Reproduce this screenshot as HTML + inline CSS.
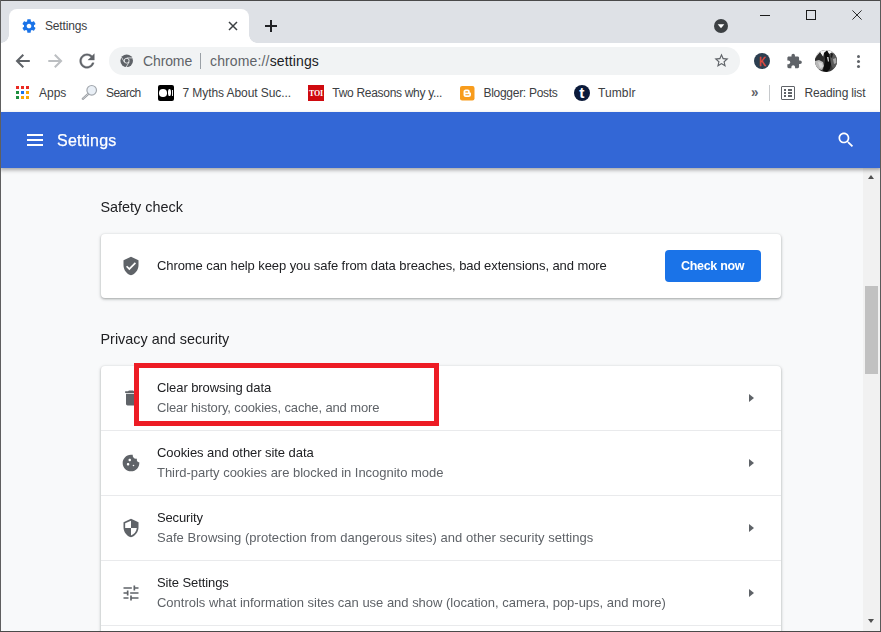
<!DOCTYPE html>
<html lang="en">
<head>
<meta charset="utf-8">
<title>Settings</title>
<style>
html,body{margin:0;padding:0;}
body{width:881px;height:632px;overflow:hidden;background:#fff;font-family:"Liberation Sans",sans-serif;position:relative;}
.abs{position:absolute;}
.t{position:absolute;white-space:nowrap;line-height:1;}
#win{position:absolute;left:0;top:0;width:881px;height:632px;overflow:hidden;}
/* tab strip */
#tabstrip{left:0;top:0;width:881px;height:43px;background:#dee1e6;}
#tab{left:9px;top:9px;width:240px;height:34px;background:#fff;border-radius:8px 8px 0 0;}
#toolbar{left:0;top:43px;width:881px;height:36px;background:#fff;}
#omni{left:109px;top:47px;width:631px;height:27.500px;border-radius:14px;background:#f1f3f4;}
#bm{left:0;top:79px;width:881px;height:33px;background:#fff;}
.bmt{font-size:12px;color:#3c4043;top:87px;}
/* settings */
#hdr{left:0;top:112px;width:881px;height:56px;background:#3367d6;box-shadow:0 2px 4px rgba(0,0,0,.35);z-index:3;}
#page{left:0;top:168px;width:881px;height:464px;background:#f8f9fa;}
.gs{will-change:transform;}
.card{background:#fff;border-radius:4px;box-shadow:0 1px 2px rgba(60,64,67,.3),0 1px 3px 1px rgba(60,64,67,.15);}
.h2{font-size:14.4px;color:#202124;}
.pt{font-size:13px;color:#202124;}
.ps{font-size:13px;color:#5f6368;}
.sep{position:absolute;left:0;width:680px;height:1px;background:#e9eaec;}
.arrow{position:absolute;width:0;height:0;border-left:5px solid #5f6368;border-top:4.5px solid transparent;border-bottom:4.5px solid transparent;}
</style>
</head>
<body>
<div id="win">
  <!-- TAB STRIP -->
  <div id="tabstrip" class="abs"></div>
  <div class="abs" style="left:1px;top:35px;width:8px;height:8px;background:radial-gradient(circle at 0 0,#dee1e6 7.5px,#fff 8px);"></div>
  <div class="abs" style="left:249px;top:35px;width:8px;height:8px;background:radial-gradient(circle at 100% 0,#dee1e6 7.5px,#fff 8px);"></div>
  <div id="tab" class="abs"></div>
  <!-- gear favicon -->
  <svg class="abs" style="left:21px;top:18px" width="16" height="16" viewBox="0 0 24 24"><path fill="#1a73e8" d="M19.43 12.98c.04-.32.07-.64.07-.98s-.03-.66-.07-.98l2.11-1.65c.19-.15.24-.42.12-.64l-2-3.46c-.12-.22-.39-.3-.61-.22l-2.49 1c-.52-.4-1.08-.73-1.69-.98l-.38-2.65C14.46 2.18 14.25 2 14 2h-4c-.25 0-.46.18-.49.42l-.38 2.65c-.61.25-1.17.59-1.69.98l-2.49-1c-.23-.09-.49 0-.61.22l-2 3.46c-.13.22-.07.49.12.64l2.11 1.65c-.04.32-.07.65-.07.98s.03.66.07.98l-2.11 1.65c-.19.15-.24.42-.12.64l2 3.46c.12.22.39.3.61.22l2.49-1c.52.4 1.080.73 1.69.98l.38 2.65c.03.24.24.42.49.42h4c.25 0 .46-.18.49-.42l.38-2.65c.61-.25 1.17-.59 1.69-.98l2.49 1c.23.09.49 0 .61-.22l2-3.46c.12-.22.07-.49-.12-.64l-2.11-1.65zM12 15.5c-1.93 0-3.5-1.57-3.5-3.5s1.570-3.500 3.500-3.500 3.500 1.570 3.500 3.500-1.570 3.500-3.500 3.500z"/></svg>
  <span class="t" id="tabtitle" style="left:45px;top:20px;font-size:12px;color:#3c4043;letter-spacing:-.17px;">Settings</span>
  <!-- tab close -->
  <svg class="abs" style="left:228px;top:21px" width="10" height="10" viewBox="0 0 10 10"><path d="M1 1L9 9M9 1L1 9" stroke="#3c4043" stroke-width="1.5" fill="none"/></svg>
  <!-- new tab plus -->
  <svg class="abs" style="left:265px;top:20px" width="12" height="12" viewBox="0 0 12 12"><path d="M6 0V12M0 6H12" stroke="#202124" stroke-width="2" fill="none"/></svg>
  <!-- tab search -->
  <svg class="abs" style="left:714px;top:18.800px" width="14" height="14" viewBox="0 0 16 16"><circle cx="8" cy="8" r="8" fill="#3c4043"/><path d="M4.200 6.100H11.800L8 10.700z" fill="#fff"/></svg>
  <!-- window controls -->
  <div class="abs" style="left:760px;top:15px;width:10px;height:1px;background:#1b1b1b;"></div>
  <div class="abs" style="left:806px;top:10px;width:8px;height:8px;border:1px solid #1b1b1b;"></div>
  <svg class="abs" style="left:852px;top:10px" width="10" height="10" viewBox="0 0 12 12"><path d="M0.500 0.500L11.500 11.500M11.500 0.500L0.500 11.500" stroke="#1b1b1b" stroke-width="1.100" fill="none"/></svg>

  <!-- TOOLBAR -->
  <div id="toolbar" class="abs"></div>
  <svg class="abs" style="left:15px;top:53px" width="16" height="16" viewBox="0 0 16 16"><path d="M14.800 8H2.600M8.300 1.700L2 8L8.300 14.300" stroke="#5f6368" stroke-width="2" fill="none"/></svg>
  <svg class="abs" style="left:47px;top:53px" width="16" height="16" viewBox="0 0 16 16"><path d="M1.300 8H13.500M7.800 1.700L14.100 8L7.800 14.300" stroke="#bcbfc2" stroke-width="2" fill="none"/></svg>
  <svg class="abs" style="left:75.800px;top:50px" width="22" height="22" viewBox="0 0 24 24"><path fill="#5f6368" stroke="#5f6368" stroke-width=".35" d="M17.650 6.350C16.200 4.900 14.210 4 12 4c-4.420 0-7.990 3.580-7.990 8s3.570 8 7.990 8c3.730 0 6.840-2.550 7.730-6h-2.080c-.820 2.330-3.040 4-5.650 4-3.310 0-6-2.690-6-6s2.690-6 6-6c1.660 0 3.140.690 4.220 1.780L13 11h7V4l-2.350 2.350z"/></svg>
  <div id="omni" class="abs"></div>
  <!-- chrome icon -->
  <svg class="abs" style="left:120.300px;top:54.300px" width="13.400" height="13.400" viewBox="0 0 14 14"><circle cx="7" cy="7" r="6.600" fill="#5f6368"/><circle cx="7" cy="7" r="2.900" fill="#f1f3f4"/><circle cx="7" cy="7" r="2.100" fill="#5f6368"/><path d="M7 4.100H13M4.500 8.450L1.500 3.300M9.500 8.450L6.500 13.600" stroke="#f1f3f4" stroke-width=".800" fill="none"/></svg>
  <span class="t" id="omni1" style="left:143px;top:54.300px;font-size:14px;color:#5f6368;letter-spacing:-.12px;">Chrome</span>
  <div class="abs" style="left:200px;top:53px;width:1px;height:16px;background:#9aa0a6;"></div>
  <span class="t" id="omni2" style="left:210px;top:54.300px;font-size:14px;color:#5f6368;letter-spacing:.14px;">chrome://<span style="color:#202124">settings</span></span>
  <!-- star -->
  <svg class="abs" style="left:713px;top:52px" width="17" height="17" viewBox="0 0 24 24"><path fill="#5f6368" d="M22 9.240l-7.190-.620L12 2 9.190 8.630 2 9.240l5.460 4.730L5.820 21 12 17.270 18.180 21l-1.630-7.030L22 9.240zM12 15.400l-3.760 2.270 1-4.280-3.320-2.880 4.380-.380L12 6.100l1.710 4.040 4.380.380-3.320 2.880 1 4.280L12 15.400z"/></svg>
  <!-- K extension -->
  <div class="abs" style="left:754px;top:53px;width:16px;height:16px;border-radius:50%;background:#2c3e50;"></div>
  <span class="t" style="left:759px;top:54.500px;font-size:13px;color:#e74c3c;transform:scaleX(.78);transform-origin:0 0;-webkit-text-stroke:.4px #e74c3c;">K</span>
  <!-- puzzle -->
  <svg class="abs" style="left:786px;top:53.300px" width="16.500" height="16.500" viewBox="0 0 24 24"><path fill="#5f6368" d="M20.500 11H19V7c0-1.100-.900-2-2-2h-4V3.500C13 2.120 11.880 1 10.500 1S8 2.120 8 3.500V5H4c-1.100 0-1.990.900-1.990 2v3.800H3.500c1.490 0 2.700 1.210 2.700 2.700s-1.210 2.700-2.700 2.700H2V20c0 1.100.900 2 2 2h3.800v-1.500c0-1.490 1.210-2.700 2.700-2.700 1.490 0 2.700 1.210 2.700 2.700V22H17c1.100 0 2-.900 2-2v-4h1.500c1.380 0 2.500-1.120 2.500-2.500S21.880 11 20.500 11z"/></svg>
  <!-- avatar -->
  <svg class="abs" style="left:815px;top:50px" width="22" height="22" viewBox="0 0 22 22"><defs><clipPath id="avc"><circle cx="11" cy="11" r="11"/></clipPath></defs><g clip-path="url(#avc)"><rect width="22" height="22" fill="#3a3a3a"/><path d="M0 0H22V5L17 2.500 14 4 12 .500 9 3 8 7 5 2 0 8z" fill="#f4f4f4"/><path d="M0 9L5 2.500 9 8 8 12 4 13 0 12z" fill="#2b2b2b"/><path d="M0 11L4 10 8 12 9 16 7 20 3 19 0 15z" fill="#b9b9b9"/><path d="M3 12L7 13 8 17 5 18z" fill="#d6d6d6"/><path d="M9 3L12 .500 14 4 15 9 16 14 15 19 12 22 8 21 9 16 10 10z" fill="#0b0b0b"/><path d="M12 7L13.500 7 14 11 13 12z" fill="#cfcfcf"/><path d="M15 4L17 2.500 22 6V16L18 19 16 14z" fill="#5a5a5a"/><path d="M18 9L21 8 21.500 13 19 14z" fill="#a8a8a8"/><path d="M16 3L18 4 17 8 15.500 7z" fill="#1c1c1c"/></g></svg>
  <!-- menu dots -->
  <div class="abs" style="left:857px;top:55px;width:3px;height:3px;border-radius:50%;background:#5f6368;box-shadow:0 5px 0 #5f6368,0 10px 0 #5f6368;"></div>

  <!-- BOOKMARK BAR -->
  <div id="bm" class="abs"></div>
  <!-- apps grid -->
  <div class="abs" style="left:16px;top:86px;width:3px;height:3px;background:#ea2a22;box-shadow:5px 0 0 #ea2a22,10px 0 0 #ea2a22,0 5px 0 #1e8e3e,5px 5px 0 #1a73e8,10px 5px 0 #f9a602,0 10px 0 #1e8e3e,5px 10px 0 #f9a602,10px 10px 0 #f9a602;"></div>
  <span class="t bmt" id="b1" style="left:39px;">Apps</span>
  <!-- magnifier favicon -->
  <svg class="abs" style="left:81px;top:84px" width="17" height="17" viewBox="0 0 17 17"><path d="M1.800 14.800L6.800 10.300" stroke="#9a9ea3" stroke-width="2.300" stroke-linecap="round"/><path d="M1.800 14.800L6.800 10.300" stroke="#d9dcdf" stroke-width=".800" stroke-linecap="round"/><circle cx="10.700" cy="6.300" r="4.800" fill="#e9eff6" stroke="#a3a8ae" stroke-width="1.200"/></svg>
  <span class="t bmt" id="b2" style="left:106px;letter-spacing:-.55px;">Search</span>
  <!-- medium favicon -->
  <div class="abs" style="left:158px;top:85px;width:16px;height:16px;background:#000;border-radius:2px;"></div>
  <div class="abs" style="left:159.300px;top:89px;width:7.600px;height:7.600px;border-radius:50%;background:#fff;"></div>
  <div class="abs" style="left:168px;top:89.300px;width:3.400px;height:7px;border-radius:50%;background:#fff;"></div>
  <div class="abs" style="left:171.800px;top:89.800px;width:1.400px;height:6px;background:#e8e8e8;"></div>
  <span class="t bmt" id="b3" style="left:182.500px;letter-spacing:-.08px;">7 Myths About Suc...</span>
  <!-- TOI favicon -->
  <div class="abs" style="left:308px;top:85px;width:16px;height:16px;background:#cf0a0f;"></div>
  <span class="t" style="left:309px;top:89.700px;font-size:8px;font-weight:bold;color:#fff;font-family:'Liberation Serif',serif;letter-spacing:-.15px;">TOI</span>
  <span class="t bmt" id="b4" style="left:332.300px;letter-spacing:-.3px;">Two Reasons why y...</span>
  <!-- blogger favicon -->
  <svg class="abs" style="left:460px;top:86px" width="14.500" height="14.500" viewBox="0 0 14 14"><rect width="14" height="14" rx="2" fill="#f89c1c"/><path d="M5.600 3.400H7.400C8.800 3.400 9.400 4.300 9.400 5.300V5.700C9.400 6.100 9.700 6.200 10 6.200 10.400 6.200 10.600 6.500 10.600 6.900V8.400C10.600 9.700 9.700 10.600 8.400 10.600H5.600C4.300 10.600 3.400 9.700 3.400 8.400V5.600C3.400 4.300 4.300 3.400 5.600 3.400Z" fill="#fff"/><path d="M5.600 5.700H7.300M5.600 8.400H8.500" stroke="#f89c1c" stroke-width="1.100" stroke-linecap="round"/></svg>
  <span class="t bmt" id="b5" style="left:483.500px;letter-spacing:-.29px;">Blogger: Posts</span>
  <!-- tumblr favicon -->
  <div class="abs" style="left:574px;top:85px;width:16px;height:16px;border-radius:50%;background:#0b1a3a;"></div>
  <span class="t" style="left:579.300px;top:85px;font-size:15.500px;font-weight:bold;color:#fff;">t</span>
  <span class="t bmt" id="b6" style="left:598px;letter-spacing:.1px;">Tumblr</span>
  <!-- chevron -->
  <span class="t" style="left:750.500px;top:85px;font-size:14px;font-weight:bold;color:#5f6368;transform:scaleX(.95);transform-origin:0 0;">»</span>
  <div class="abs" style="left:769px;top:85px;width:1px;height:16px;background:#c6c9cc;"></div>
  <!-- reading list icon -->
  <div class="abs" style="left:781px;top:86px;width:12px;height:12px;border:1.300px solid #5f6368;border-radius:1px;"></div>
  <div class="abs" style="left:784px;top:89px;width:2px;height:1.500px;background:#5f6368;box-shadow:0 3px 0 #5f6368,0 6px 0 #5f6368;"></div>
  <div class="abs" style="left:787.500px;top:89px;width:4.500px;height:1.500px;background:#5f6368;box-shadow:0 3px 0 #5f6368,0 6px 0 #5f6368;"></div>
  <span class="t bmt" id="b7" style="left:804.500px;letter-spacing:-.15px;">Reading list</span>

  <!-- SETTINGS PAGE -->
  <div id="page" class="abs"><div class="abs gs" style="left:0;top:0;width:863px;height:464px;">
    <span class="t h2" id="s1" style="left:100.500px;top:31.500px;">Safety check</span>
    <div class="card abs" style="left:101px;top:66px;width:680px;height:64px;">
      <svg class="abs" style="left:20px;top:22px" width="20" height="20" viewBox="0 0 24 24"><path fill="#5f6368" d="M12 1L3 5v6c0 5.550 3.840 10.740 9 12 5.160-1.260 9-6.450 9-12V5l-9-4zm-2 16l-4-4 1.410-1.410L10 14.170l6.590-6.590L18 9l-8 8z"/></svg>
      <span class="t pt" id="s2" style="left:56px;top:25px;letter-spacing:-.085px;">Chrome can help keep you safe from data breaches, bad extensions, and more</span>
      <div class="abs" style="left:564px;top:16px;width:96px;height:32px;border-radius:4px;background:#1a73e8;"></div>
      <span class="t" id="s3" style="left:580px;top:25.800px;font-size:12.500px;font-weight:bold;color:#fff;letter-spacing:-.3px;">Check now</span>
    </div>
    <span class="t h2" id="s4" style="left:100.500px;top:164px;">Privacy and security</span>
    <div class="card abs" style="left:101px;top:198px;width:680px;height:300px;">
      <!-- row 1 -->
      <svg class="abs" style="left:20px;top:22px" width="20" height="20" viewBox="0 0 24 24"><path fill="#5f6368" d="M6 19c0 1.100.900 2 2 2h8c1.100 0 2-.900 2-2V7H6v12zM19 4h-3.500l-1-1h-5l-1 1H5v2h14V4z"/></svg>
      <div class="arrow" style="left:648px;top:27.500px;"></div>
      <div class="sep" style="top:64px;"></div>
      <!-- row 2 -->
      <svg class="abs" style="left:20px;top:87px" width="20" height="20" viewBox="0 0 24 24"><path fill="#5f6368" d="M21.950 10.990c-1.790-.030-3.700-1.950-2.680-4.220-2.980 1-5.770-1.590-5.190-4.560C6.950.710 2 6.580 2 12c0 5.520 4.480 10 10 10 5.890 0 10.540-5.080 9.950-11.010zM8.500 15c-.830 0-1.500-.670-1.500-1.500S7.670 12 8.500 12s1.500.670 1.500 1.500S9.330 15 8.500 15zm2-5C9.670 10 9 9.330 9 8.500S9.670 7 10.500 7s1.500.670 1.500 1.500-.670 1.500-1.500 1.500zm4.500 6c-.550 0-1-.450-1-1s.450-1 1-1 1 .450 1 1-.450 1-1 1z"/></svg>
      <span class="t pt" id="r2a" style="left:56px;top:80px;letter-spacing:-0.060px;">Cookies and other site data</span>
      <span class="t ps" id="r2b" style="left:56px;top:100px;letter-spacing:-0.025px;">Third-party cookies are blocked in Incognito mode</span>
      <div class="arrow" style="left:648px;top:92.500px;"></div>
      <div class="sep" style="top:129px;"></div>
      <!-- row 3 -->
      <svg class="abs" style="left:20px;top:152px" width="20" height="20" viewBox="0 0 24 24"><path fill="#5f6368" d="M12 1L3 5v6c0 5.550 3.840 10.740 9 12 5.160-1.260 9-6.450 9-12V5l-9-4zm0 10.990h7c-.530 4.120-3.280 7.790-7 8.940V12H5V6.300l7-3.110v8.800z"/></svg>
      <span class="t pt" id="r3a" style="left:56px;top:145px;letter-spacing:-0.150px;">Security</span>
      <span class="t ps" id="r3b" style="left:56px;top:165px;letter-spacing:0.037px;">Safe Browsing (protection from dangerous sites) and other security settings</span>
      <div class="arrow" style="left:648px;top:157.500px;"></div>
      <div class="sep" style="top:194px;"></div>
      <!-- row 4 -->
      <svg class="abs" style="left:20px;top:217px" width="20" height="20" viewBox="0 0 24 24"><path fill="#5f6368" d="M3 17v2h6v-2H3zM3 5v2h10V5H3zm10 16v-2h8v-2h-8v-2h-2v6h2zM7 9v2H3v2h4v2h2V9H7zm14 4v-2H11v2h10zm-6-4h2V7h4V5h-4V3h-2v6z"/></svg>
      <span class="t pt" id="r4a" style="left:56px;top:210px;letter-spacing:-0.100px;">Site Settings</span>
      <span class="t ps" id="r4b" style="left:56px;top:230px;letter-spacing:-0.015px;">Controls what information sites can use and show (location, camera, pop-ups, and more)</span>
      <div class="arrow" style="left:648px;top:222.500px;"></div>
      <div class="sep" style="top:259px;"></div>
    </div>
    <!-- red highlight box -->
    <div class="abs" style="left:134px;top:195px;width:295px;height:53px;border:5px solid #ed1c24;background:#fff;box-sizing:content-box;"></div>
    <span class="t pt" id="r1a" style="left:157px;top:213px;letter-spacing:-0.080px;">Clear browsing data</span>
    <span class="t ps" id="r1b" style="left:157px;top:233px;letter-spacing:-0.130px;">Clear history, cookies, cache, and more</span>
    </div>
    <!-- scrollbar -->
    <div class="abs" style="left:863px;top:0;width:17px;height:464px;background:#f1f1f1;"></div>
    <div class="abs" style="left:865px;top:117.500px;width:13px;height:88.500px;background:#c1c1c1;"></div>
    <div class="abs" style="left:868px;top:7px;width:0;height:0;border-left:3.700px solid transparent;border-right:3.700px solid transparent;border-bottom:4px solid #505050;"></div>
    <div class="abs" style="left:868px;top:451px;width:0;height:0;border-left:3.700px solid transparent;border-right:3.700px solid transparent;border-top:4px solid #505050;"></div>
  </div>

  <!-- SETTINGS HEADER -->
  <div id="hdr" class="abs">
    <div class="abs" style="left:27px;top:22px;width:16px;height:2px;background:#fff;box-shadow:0 5px 0 #fff,0 10px 0 #fff;"></div>
    <span class="t" id="h1" style="left:57px;top:21px;font-size:16px;color:#fff;letter-spacing:.22px;-webkit-text-stroke:.25px #fff;">Settings</span>
    <svg class="abs" style="left:835.800px;top:18.300px" width="20" height="20" viewBox="0 0 24 24"><path fill="#fff" d="M15.500 14h-.790l-.280-.270C15.410 12.590 16 11.110 16 9.500 16 5.910 13.090 3 9.500 3S3 5.910 3 9.500 5.910 16 9.500 16c1.610 0 3.090-.590 4.230-1.570l.270.280v.790l5 4.990L20.490 19l-4.990-5zm-6 0C7.010 14 5 11.990 5 9.500S7.010 5 9.500 5 14 7.010 14 9.500 11.990 14 9.500 14z"/></svg>
  </div>

  <!-- window border -->
  <div class="abs" style="left:0;top:0;width:881px;height:1.400px;background:#4a4a4a;z-index:9;"></div>
  <div class="abs" style="left:0;top:0;width:1px;height:632px;background:#5f5f5f;z-index:9;"></div>
  <div class="abs" style="left:879.500px;top:0;width:1.500px;height:632px;background:#5a5a5a;z-index:9;"></div>
  <div class="abs" style="left:0;top:630.700px;width:881px;height:1.300px;background:#4a4a4a;z-index:9;"></div>
</div>
</body>
</html>
